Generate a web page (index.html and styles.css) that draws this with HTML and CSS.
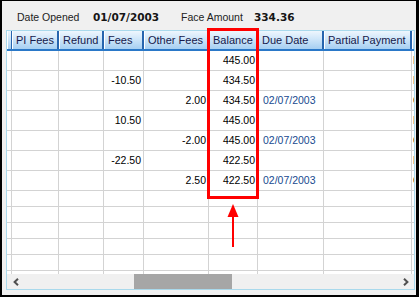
FILE: index.html
```html
<!DOCTYPE html>
<html>
<head>
<meta charset="utf-8">
<link rel="stylesheet" href="styles.css">
</head>
<body>
<div class="frame">
  <div class="info">
    <span class="label">Date Opened</span>
    <span class="value">01/07/2003</span>
    <span class="label">Face Amount</span>
    <span class="value">334.36</span>
  </div>
  <div class="grid">
    <div class="row head">
      <div class="hc"></div>
      <div class="hc">PI Fees</div>
      <div class="hc">Refund</div>
      <div class="hc">Fees</div>
      <div class="hc">Other Fees</div>
      <div class="hc">Balance</div>
      <div class="hc">Due Date</div>
      <div class="hc">Partial Payment</div>
      <div class="hc"></div>
    </div>
    <div class="body">
      <div class="row"><div class="c"></div><div class="c"></div><div class="c"></div><div class="c"></div><div class="c"></div><div class="c">445.00</div><div class="c date"></div><div class="c"></div><div class="c txt">E</div></div>
      <div class="row"><div class="c"></div><div class="c"></div><div class="c"></div><div class="c">-10.50</div><div class="c"></div><div class="c">434.50</div><div class="c date"></div><div class="c"></div><div class="c txt">F</div></div>
      <div class="row"><div class="c"></div><div class="c"></div><div class="c"></div><div class="c"></div><div class="c">2.00</div><div class="c">434.50</div><div class="c date">02/07/2003</div><div class="c"></div><div class="c txt">C</div></div>
      <div class="row"><div class="c"></div><div class="c"></div><div class="c"></div><div class="c">10.50</div><div class="c"></div><div class="c">445.00</div><div class="c date"></div><div class="c"></div><div class="c txt">F</div></div>
      <div class="row"><div class="c"></div><div class="c"></div><div class="c"></div><div class="c"></div><div class="c">-2.00</div><div class="c">445.00</div><div class="c date">02/07/2003</div><div class="c"></div><div class="c txt">C</div></div>
      <div class="row"><div class="c"></div><div class="c"></div><div class="c"></div><div class="c">-22.50</div><div class="c"></div><div class="c">422.50</div><div class="c date"></div><div class="c"></div><div class="c txt">F</div></div>
      <div class="row"><div class="c"></div><div class="c"></div><div class="c"></div><div class="c"></div><div class="c">2.50</div><div class="c">422.50</div><div class="c date">02/07/2003</div><div class="c"></div><div class="c txt">C</div></div>
      <div class="row empty"><div class="c"></div><div class="c"></div><div class="c"></div><div class="c"></div><div class="c"></div><div class="c"></div><div class="c"></div><div class="c"></div><div class="c"></div></div>
      <div class="row empty"><div class="c"></div><div class="c"></div><div class="c"></div><div class="c"></div><div class="c"></div><div class="c"></div><div class="c"></div><div class="c"></div><div class="c"></div></div>
      <div class="row empty"><div class="c"></div><div class="c"></div><div class="c"></div><div class="c"></div><div class="c"></div><div class="c"></div><div class="c"></div><div class="c"></div><div class="c"></div></div>
      <div class="row empty"><div class="c"></div><div class="c"></div><div class="c"></div><div class="c"></div><div class="c"></div><div class="c"></div><div class="c"></div><div class="c"></div><div class="c"></div></div>
      <div class="row empty"><div class="c"></div><div class="c"></div><div class="c"></div><div class="c"></div><div class="c"></div><div class="c"></div><div class="c"></div><div class="c"></div><div class="c"></div></div>
      <div class="row empty"><div class="c"></div><div class="c"></div><div class="c"></div><div class="c"></div><div class="c"></div><div class="c"></div><div class="c"></div><div class="c"></div><div class="c"></div></div>
    </div>
    <div class="scroll">
      <div class="btn"><svg width="6" height="8" viewBox="0 0 6 8"><path d="M5 0.8 L1.6 4 L5 7.2" fill="none" stroke="#505050" stroke-width="2"/></svg></div>
      <div class="track"><div class="thumb"></div></div>
      <div class="btn"><svg width="6" height="8" viewBox="0 0 6 8"><path d="M1 0.8 L4.4 4 L1 7.2" fill="none" stroke="#505050" stroke-width="2"/></svg></div>
    </div>
  </div>
  <div class="highlight"></div>
  <svg class="pointer" width="12" height="44" viewBox="0 0 12 44">
    <polygon points="6,0 0.5,13 11.5,13" fill="#f00"/>
    <rect x="5" y="12" width="2" height="31" fill="#f00"/>
  </svg>
</div>
</body>
</html>
```

FILE: styles.css
```css
html, body {
  margin: 0;
  padding: 0;
  background: #fff;
}

.frame {
  position: relative;
  width: 419px;
  height: 297px;
  box-sizing: border-box;
  border-style: solid;
  border-color: #000;
  border-width: 1px 3px 2px 2px;
  background: #f0f0f0;
  font-family: "Liberation Sans", Arial, sans-serif;
  overflow: hidden;
}

.info {
  height: 29px;
  box-sizing: border-box;
  padding: 2px 0 0 15px;
  display: grid;
  grid-template-columns: 76px 88px 73px auto;
  align-items: center;
}

.label {
  font-size: 10.5px;
  color: #222;
}

.value {
  font-family: "DejaVu Sans", Verdana, sans-serif;
  font-weight: bold;
  font-size: 10.5px;
  color: #151515;
}

.grid {
  margin-left: 4px;
  width: 409px;
  height: 260px;
  box-sizing: border-box;
  border: 1px solid #a9d9ec;
  background: #fff;
  display: flex;
  flex-direction: column;
  overflow: hidden;
}

.row {
  display: grid;
  grid-template-columns: 5px 47px 45px 40px 65px 49px 66px 88px 60px;
  height: 20px;
  flex: none;
}

.row.empty {
  height: 16px;
}

.head {
  height: 20px;
  box-sizing: border-box;
  border-bottom: 2px solid #2a78c8;
  background: linear-gradient(to bottom, #eef6fd 0%, #cfe6f9 45%, #a6cff2 100%);
}

.hc {
  box-sizing: border-box;
  border-right: 2px solid #2765ae;
  box-shadow: inset 1px 0 0 #ffffff;
  padding: 1px 0 0 4px;
  font-size: 11px;
  line-height: 16px;
  color: #16194a;
  white-space: nowrap;
  overflow: hidden;
}

.body {
  flex: 1;
  overflow: hidden;
  display: flex;
  flex-direction: column;
}

.c {
  box-sizing: border-box;
  border-right: 1px solid #d3d3d3;
  border-bottom: 1px solid #d3d3d3;
  padding: 0 2px 0 2px;
  font-size: 10.5px;
  line-height: 19px;
  color: #000;
  text-align: right;
  white-space: nowrap;
  overflow: hidden;
}

.c.date {
  text-align: left;
  padding-left: 5px;
  color: #184a8f;
}

.c.txt {
  text-align: left;
  padding-left: 1px;
}

.scroll {
  height: 15px;
  flex: none;
  display: flex;
  align-items: stretch;
  background: #f0f0f0;
}

.btn {
  width: 17px;
  display: flex;
  align-items: center;
  justify-content: center;
}

.track {
  flex: 1;
  display: flex;
}

.thumb {
  margin-left: 110px;
  width: 98px;
  background: #a6a6a6;
}

.highlight {
  position: absolute;
  left: 205px;
  top: 27px;
  width: 52px;
  height: 171px;
  box-sizing: border-box;
  border: 3px solid #f00;
}

.pointer {
  position: absolute;
  left: 225px;
  top: 203px;
}
```
